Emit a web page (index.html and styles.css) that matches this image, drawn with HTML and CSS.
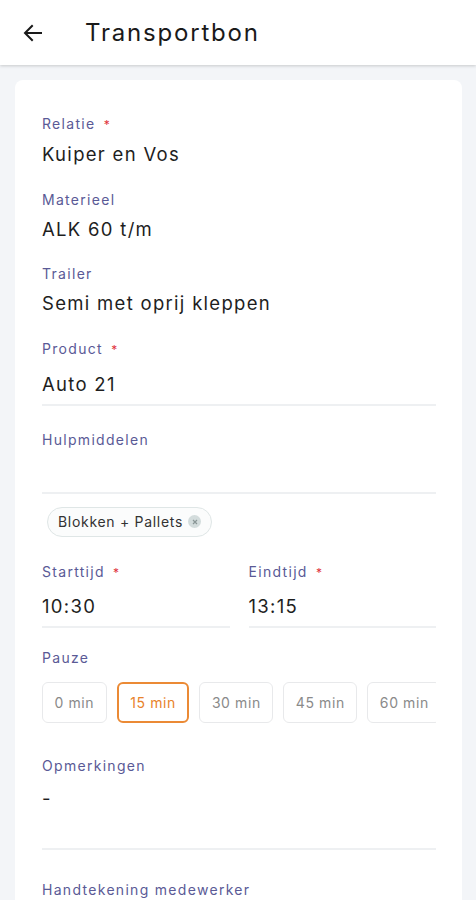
FILE: index.html
```html
<!DOCTYPE html>
<html lang="nl">
<head>
<meta charset="utf-8">
<title>Transportbon</title>
<link rel="stylesheet" href="styles.css">
</head>
<body>
<header class="appbar">
  <svg class="back" width="24" height="24" viewBox="0 0 24 24"><path d="M20 12H5M11 5l-7 7 7 7" fill="none" stroke="#1a1a1a" stroke-width="2" stroke-linecap="square"/></svg>
  <h1 class="title">Transportbon</h1>
</header>
<main class="page">
  <section class="card">
    <div class="field">
      <div class="label">Relatie <span class="req">*</span></div>
      <div class="value">Kuiper en Vos</div>
    </div>
    <div class="field">
      <div class="label">Materieel</div>
      <div class="value">ALK 60 t/m</div>
    </div>
    <div class="field">
      <div class="label">Trailer</div>
      <div class="value">Semi met oprij kleppen</div>
    </div>
    <div class="input product">
      <div class="label">Product <span class="req">*</span></div>
      <div class="value line">Auto 21</div>
    </div>
    <div class="input">
      <div class="label">Hulpmiddelen</div>
      <div class="value line empty"></div>
    </div>
    <div class="chips">
      <span class="chip">Blokken + Pallets <span class="chip-x"><svg width="8" height="8" viewBox="0 0 8 8"><path d="M2 2l4 4M6 2l-4 4" stroke="#8a9696" stroke-width="1.2"/></svg></span></span>
    </div>
    <div class="times">
      <div class="input">
        <div class="label">Starttijd <span class="req">*</span></div>
        <div class="value line">10:30</div>
      </div>
      <div class="input">
        <div class="label">Eindtijd <span class="req">*</span></div>
        <div class="value line">13:15</div>
      </div>
    </div>
    <div class="pauze">
      <div class="label">Pauze</div>
      <div class="options">
        <span class="opt">0 min</span>
        <span class="opt sel">15 min</span>
        <span class="opt">30 min</span>
        <span class="opt">45 min</span>
        <span class="opt">60 min</span>
      </div>
    </div>
    <div class="input notes">
      <div class="label">Opmerkingen</div>
      <div class="value line tall">-</div>
    </div>
    <div class="input">
      <div class="label">Handtekening medewerker</div>
    </div>
  </section>
</main>
</body>
</html>
```
FILE: styles.css
```css
* { box-sizing: border-box; }
html, body { margin: 0; padding: 0; }
body {
  width: 476px;
  height: 900px;
  overflow: hidden;
  background: #f3f5f8;
  font-family: "Inter", "Noto Sans", sans-serif;
  color: #1e1e1e;
}
.appbar {
  height: 65px;
  background: #fff;
  display: flex;
  align-items: center;
  padding-left: 21px;
  box-shadow: 0 1px 3px rgba(0,0,0,0.18);
  position: relative;
  z-index: 1;
}
.back { display: block; margin-top: 1px; }
.title {
  margin: 0 0 0 40px;
  font-size: 24px;
  font-weight: 400;
  letter-spacing: 1.8px;
  color: #1a1a1a;
}
.page { padding: 15px 14px 0 15px; }
.card {
  background: #fff;
  border-radius: 8px;
  padding: 34px 26px 40px 27px;
  height: 900px;
}
.label {
  font-size: 14px;
  line-height: 20px;
  color: #5a5a96;
  letter-spacing: 1.3px;
}
.req { color: #e0323c; margin-left: 3px; font-size: 12px; }
.value {
  font-size: 18.5px;
  line-height: 28px;
  color: #1e1e1e;
  letter-spacing: 1.3px;
}
.field { padding-bottom: 21.5px; }
.field .value { margin-top: 5px; }
.input .value { margin-top: 10px; }
.line { border-bottom: 2px solid #eef0f2; padding-bottom: 6px; }
.empty { height: 44px; margin-top: 0 !important; }
.input { padding-bottom: 26px; }
.product { padding-bottom: 24px; }
.chips { margin-top: -13px; padding: 0 0 25px 5px; }
.chip {
  display: inline-flex;
  align-items: center;
  height: 30px;
  padding: 0 10px 0 10px;
  border: 1px solid #dfe6e6;
  border-radius: 15px;
  background: #fbfcfc;
  font-size: 14px;
  color: #333;
  letter-spacing: 0.7px;
}
.chip-x {
  display: inline-flex;
  align-items: center;
  justify-content: center;
  width: 13px;
  height: 13px;
  border-radius: 50%;
  background: #d3dcdc;
  margin-left: 5px;
}
.times { display: grid; grid-template-columns: 1fr 1fr; column-gap: 19px; }
.times .input { padding-bottom: 20px; }
.times .value { margin-top: 9px; padding-bottom: 6px; }
.pauze { padding-bottom: 33px; }
.options {
  display: flex;
  gap: 10px;
  margin-top: 14px;
  overflow: hidden;
  white-space: nowrap;
}
.opt {
  flex: none;
  height: 41px;
  display: inline-flex;
  align-items: center;
  padding: 0 11.5px;
  border: 1.5px solid #e8e9eb;
  border-radius: 6px;
  font-size: 14px;
  letter-spacing: 0.6px;
  color: #8a8a8a;
}
.opt.sel { border: 2px solid #eb8a35; color: #e8822a; }
.notes { padding-bottom: 30px; }
.tall { height: 66px; margin-top: 8px !important; }
```
